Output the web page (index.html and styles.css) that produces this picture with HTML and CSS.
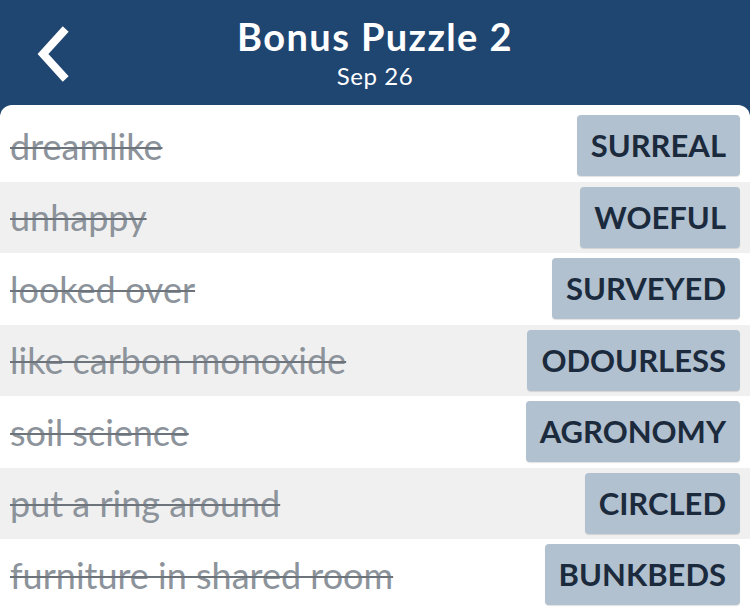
FILE: index.html
```html
<!DOCTYPE html>
<html lang="en">
<head>
  <meta charset="UTF-8">
  <title>Bonus Puzzle 2</title>
  <link rel="stylesheet" href="styles.css">
</head>
<body>
  <div class="app">
    <header class="topbar">
      <a class="back" href="#">
        <svg width="40" height="56" viewBox="0 0 40 56"><polyline points="30,6 10,28 30,50" fill="none" stroke="#fff" stroke-width="8" stroke-linecap="square"/></svg>
      </a>
      <div class="title">
        <h1>Bonus Puzzle 2</h1>
        <div class="date">Sep 26</div>
      </div>
    </header>

    <div class="card">
      <div class="row"><span class="clue">dreamlike</span><span class="answer">SURREAL</span></div>
      <div class="row"><span class="clue">unhappy</span><span class="answer">WOEFUL</span></div>
      <div class="row"><span class="clue">looked over</span><span class="answer">SURVEYED</span></div>
      <div class="row"><span class="clue">like carbon monoxide</span><span class="answer">ODOURLESS</span></div>
      <div class="row"><span class="clue">soil science</span><span class="answer">AGRONOMY</span></div>
      <div class="row"><span class="clue">put a ring around</span><span class="answer">CIRCLED</span></div>
      <div class="row"><span class="clue">furniture in shared room</span><span class="answer">BUNKBEDS</span></div>
    </div>
  </div>
</body>
</html>
```

FILE: styles.css
```css
html, body {
  margin: 0;
  height: 100%;
}

body {
  background: #fff;
  font-family: Lato, "Open Sans", sans-serif;
}

.app {
  height: 100%;
  display: flex;
  flex-direction: column;
  background: #1f4571;
}

/* header */
.topbar {
  height: 105px;
  position: relative;
  display: flex;
  justify-content: center;
  flex-shrink: 0;
}

.back {
  position: absolute;
  left: 33px;
  top: 26px;
  display: block;
}

.title {
  text-align: center;
  color: #fff;
  padding-top: 12px;
}

.title h1 {
  margin: 0;
  font-size: 38px;
  font-weight: 700;
  letter-spacing: 1.4px;
  line-height: 48px;
}

.date {
  font-size: 24px;
  letter-spacing: 0.6px;
  line-height: 32px;
}

/* list */
.card {
  flex: 1;
  background: #fff;
  border-radius: 12px 12px 0 0;
  padding-top: 5px;
}

.row {
  height: 71.5px;
  display: flex;
  align-items: center;
  justify-content: space-between;
  padding: 0 10px;
}

.row:nth-child(even) {
  background: #f0f0f0;
}

.clue {
  font-size: 36px;
  color: #8c939b;
  text-decoration: line-through;
  text-decoration-color: #6d737a;
  text-decoration-thickness: 2px;
}

.answer {
  background: #b1c1cf;
  color: #1b2a3c;
  font-size: 31px;
  font-weight: 700;
  height: 61px;
  line-height: 61px;
  padding: 0 14px;
  border-radius: 4px;
  box-shadow: 0 1px 1px rgba(0, 0, 0, 0.12);
}
```
